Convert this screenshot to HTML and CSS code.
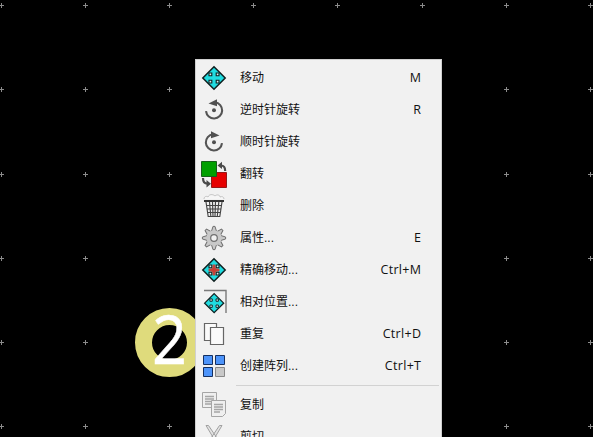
FILE: index.html
```
<!DOCTYPE html>
<html lang="zh-CN">
<head>
<meta charset="utf-8">
<title>PCB</title>
<link rel="stylesheet" href="styles.css">
</head>
<body>
<main class="canvas">
<svg class="grid" width="593" height="437">
<defs>
<g id="row"><path d="M-1 .5h5M83 .5h5M251 .5h5M335 .5h5M420 .5h5M504 .5h5M588 .5h5M1.5-2v5M85.5-2v5M253.5-2v5M337.5-2v5M422.5-2v5M506.5-2v5M590.5-2v5"/></g>
<path id="cross" d="M167 .5h5M169.5-2v5"/>
</defs>
<use href="#row" y="5"/><use href="#row" y="89"/><use href="#row" y="174"/><use href="#row" y="258"/><use href="#row" y="342"/><use href="#row" y="426"/>
<use href="#cross" y="5"/><use href="#cross" y="89"/><use href="#cross" y="174"/><use href="#cross" y="258"/><use href="#cross" y="426"/>
</svg>
<div class="pad"><span class="pad-number">2</span></div>
<nav class="menu">
<div class="item"><svg class="icon" viewBox="0 0 26 26"><g id="move"><path d="M13 1.8 24.2 13 13 24.2 1.8 13Z" fill="#20dce0" stroke="#102020" stroke-width="1.5"/><g fill="#d5f2f2" stroke="#102020" stroke-width="1.1"><path d="M8 8h2.8v2.8H8zM15.2 8H18v2.8h-2.8zM8 15.2h2.8V18H8zM15.2 15.2H18V18h-2.8z"/></g></g></svg><span>移动</span><kbd>M</kbd></div>
<div class="item"><svg class="icon" viewBox="0 0 26 26"><g id="rotate"><path d="M14 5.3A8.1 8.1 0 1 1 5 14.2" fill="none" stroke="#545454" stroke-width="2.1"/><path d="M7.5 6.5 16 2.3V9.2Z" fill="#505050"/><circle cx="13" cy="13.2" r="2" fill="#505050"/></g></svg><span>逆时针旋转</span><kbd>R</kbd></div>
<div class="item"><svg class="icon" viewBox="0 0 26 26"><use href="#rotate" transform="matrix(-1 0 0 1 26 0)"/></svg><span>顺时针旋转</span></div>
<div class="item"><svg class="icon" viewBox="0 0 26 26"><path d="M10.5 11.5h15v15h-15z" fill="#e60000" stroke="#951818"/><path d="M.5.5h15v15H.5z" fill="#00a000" stroke="#17601a"/><path d="M20 4.5c2.8 0 4.2 1.8 4.2 5.5M2 17c0 3.8 1.6 5.7 4.5 5.7" fill="none" stroke="#4a4a4a" stroke-width="2.2"/><path d="m16.5 4.5 4.5-3.8v7.4zM10 22.7l-4.5-3.7v7.4z" fill="#4a4a4a"/></svg><span>翻转</span></div>
<div class="item"><svg class="icon" viewBox="0 0 26 26"><path d="M3 6c0-3 3-3 4-2 1-3 5-3 7-1 2-2 5-1 5 1 2-1 4 0 4 2" fill="#f6f6f6" stroke="#bdbdbd" stroke-width=".9"/><path d="M3 8h20" stroke="#333" stroke-width="2"/><path d="m5 9 2.2 14.5h11.6L21 9M8.5 9l1.3 14M11.5 9l.5 14M14.5 9l-.5 14M17.8 9l-1.5 14M5.5 12.5h15M6 16h14M6.5 19.5h13" fill="none" stroke="#444" stroke-width="1.15"/></svg><span>删除</span></div>
<div class="item"><svg class="icon" viewBox="0 0 26 26"><g id="teeth" fill="#c8c8c8" stroke="#707070" stroke-width="1"><path d="M10.6 6 12 1.4h2L15.4 6M20 10.6l4.6 1.4v2L20 15.4M15.4 20 14 24.6h-2L10.6 20M6 15.4 1.4 14v-2L6 10.6"/></g><use href="#teeth" transform="rotate(45 13 13)"/><circle cx="13" cy="13" r="7.5" fill="#c8c8c8"/><circle cx="13" cy="13" r="3.3" fill="#f0f0f0" stroke="#707070" stroke-width="1.2"/></svg><span>属性...</span><kbd>E</kbd></div>
<div class="item"><svg class="icon" viewBox="0 0 26 26"><use href="#move"/><path d="M12 8h2v3h1v1h3v2h-3v1h-1v3h-2v-3h-1v-1H8v-2h3v-1h1z" fill="#c83e35" stroke="#c14a40"/></svg><span>精确移动...</span><kbd>Ctrl+M</kbd></div>
<div class="item"><svg class="icon" viewBox="0 0 26 26"><path d="M3 1.5h22V24" fill="none" stroke="#7a7a7a" stroke-width="1.4"/><use href="#move" transform="translate(2.1 3.1) scale(.85)"/></svg><span>相对位置...</span></div>
<div class="item"><svg class="icon" viewBox="0 0 26 26"><g fill="#fafafa" stroke="#666" stroke-width="1.2"><path d="M3.5 2.5h12v17h-12z"/><path d="M9.5 6.5h13v17h-13z"/></g></svg><span>重复</span><kbd>Ctrl+D</kbd></div>
<div class="item"><svg class="icon" viewBox="0 0 26 26"><path d="M2.5 2.5h9v9h-9zM14.5 2.5h9v9h-9zM2.5 14.5h9v9h-9z" fill="#4d94fa" stroke="#142f60"/><path d="M14.5 14.5h9v9h-9z" fill="#c8c8c8" stroke="#888"/></svg><span>创建阵列...</span><kbd>Ctrl+T</kbd></div>
<div class="separator"></div>
<div class="item"><svg class="icon" viewBox="0 0 26 26"><g fill="#efefef" stroke="#a5a5a5"><path d="M1.5.5h14v15h-14z"/><path d="M4 4.5h9M4 7h9M4 9.5h9M4 12h6" stroke-width="1.6"/><path d="M10.5 8.5h14v13l-3 3h-11z"/><path d="M13 12.5h9M13 15h9M13 17.5h9M13 20h6" stroke-width="1.6"/></g></svg><span>复制</span></div>
<div class="item"><svg class="icon" viewBox="0 0 26 26"><path d="M5 1.5 16 20l2-3L7.5 1.5zM21 1.5 10 20l-2-3L18.5 1.5z" fill="#e3e3e3" stroke="#a0a0a0"/></svg><span>剪切</span></div>
</nav>
</main>
</body>
</html>
```
FILE: styles.css
```
body {
  margin: 0;
  background: #000;
}
.canvas {
  position: relative;
  width: 593px;
  height: 437px;
  overflow: hidden;
}
.grid {
  display: block;
  stroke: #8c8c8c;
  shape-rendering: crispEdges;
}
.pad {
  position: absolute;
  left: 135px;
  top: 308px;
  box-sizing: border-box;
  width: 69px;
  height: 69px;
  border: 17px solid #dfdb7c;
  border-radius: 50%;
  display: flex;
  align-items: center;
  justify-content: center;
}
.pad-number {
  color: #fff;
  font: 68px/68px "Open Sans", sans-serif;
  -webkit-text-stroke: 0.5px #fff;
  transform: translate(0, -5px) scaleX(0.9);
}
.menu {
  position: absolute;
  left: 195px;
  top: 59px;
  box-sizing: border-box;
  width: 247px;
  height: 420px;
  padding: 2px;
  border: 1px solid #d0d0d0;
  background: #f1f1f1;
  color: #111;
  font: 12px/16px "Liberation Sans", "Noto Sans CJK SC", sans-serif;
}
.item {
  display: flex;
  align-items: center;
  height: 32px;
  padding: 0 18px 0 3px;
}
.icon {
  width: 26px;
  height: 26px;
  margin-right: 13px;
  overflow: visible;
}
kbd {
  margin-left: auto;
  font: 12.5px/16px "Open Sans", sans-serif;
  letter-spacing: 0.3px;
  margin-right: -0.3px;
}
.separator {
  height: 1px;
  margin: 3px 0 3px 38px;
  background: #d2d2d2;
}
```
